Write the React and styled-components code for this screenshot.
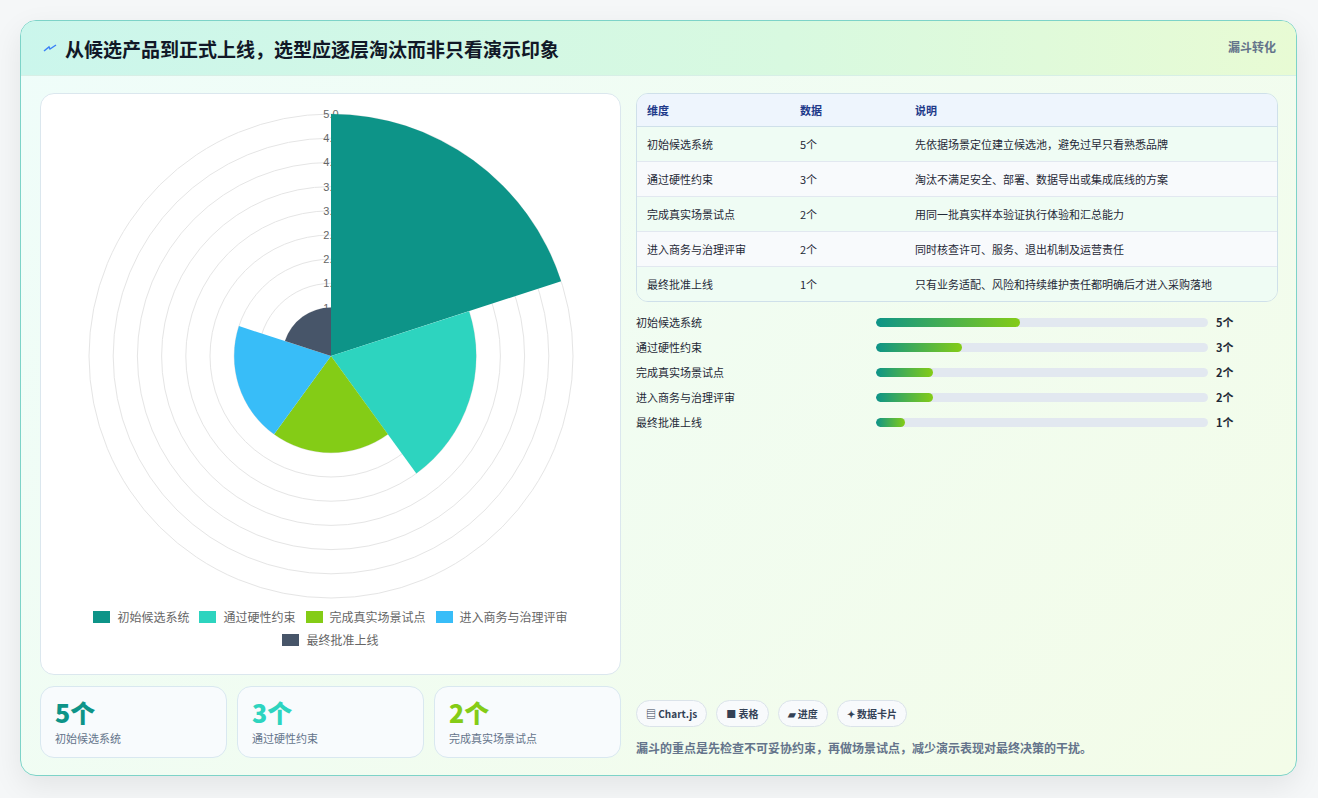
import React from "react";
import styled, { createGlobalStyle } from "styled-components";

const G = createGlobalStyle`
  body{margin:0;background:#f5f7f8;font-family:"Noto Sans CJK SC","Noto Sans",sans-serif;}
`;
const data = [
  { n: "初始候选系统", v: 5, c: "#0d9488", d: "先依据场景定位建立候选池，避免过早只看熟悉品牌" },
  { n: "通过硬性约束", v: 3, c: "#2dd4bf", d: "淘汰不满足安全、部署、数据导出或集成底线的方案" },
  { n: "完成真实场景试点", v: 2, c: "#84cc16", d: "用同一批真实样本验证执行体验和汇总能力" },
  { n: "进入商务与治理评审", v: 2, c: "#38bdf8", d: "同时核查许可、服务、退出机制及运营责任" },
  { n: "最终批准上线", v: 1, c: "#475569", d: "只有业务适配、风险和持续维护责任都明确后才进入采购落地" },
];
const Page = styled.div`padding:20px 21px 22px 20px;`;
const Card = styled.div`
  height:754px;border:1px solid #7dd3c8;border-radius:16px;overflow:hidden;
  background:linear-gradient(135deg,#effdfa 0%,#f3fce8 100%);
  box-shadow:0 10px 30px rgba(0,0,0,.08);display:flex;flex-direction:column;`;
const Header = styled.div`
  height:54px;flex:none;display:flex;align-items:center;justify-content:space-between;
  padding:0 20px 0 22px;border-bottom:1px solid #d7efe6;
  background:linear-gradient(90deg,#cbf6ec 0%,#d8f9e0 60%,#e8fbd4 100%);`;
const Title = styled.h1`margin:0;font-size:19px;font-weight:700;color:#111827;display:flex;align-items:center;gap:8px;`;
const Tag = styled.span`font-size:12px;font-weight:700;color:#64748b;align-self:flex-start;margin-top:17px;`;
const Body = styled.div`flex:1;display:grid;grid-template-columns:581px 1fr;gap:15px;padding:17px 18px 18px 19px;`;
const Left = styled.div`display:flex;flex-direction:column;gap:11px;`;
const ChartCard = styled.div`height:580px;background:#fff;border:1px solid #dbe7ee;border-radius:14px;display:flex;flex-direction:column;align-items:center;`;
const Legend = styled.div`width:500px;display:flex;flex-wrap:wrap;justify-content:center;gap:6px 10px;margin-top:4px;`;
const LItem = styled.span`display:flex;align-items:center;gap:7px;font-size:12px;color:#666;`;
const Sw = styled.i`width:17px;height:12px;background:${p => p.c};display:inline-block;`;
const Stats = styled.div`display:grid;grid-template-columns:repeat(3,1fr);gap:10px;`;
const Stat = styled.div`height:72px;box-sizing:border-box;border:1px solid #d9e8f0;border-radius:14px;background:#f8fbfd;padding:10px 14px;`;
const Big = styled.div`font-size:25px;font-weight:800;color:${p => p.c};line-height:30px;`;
const Small = styled.div`font-size:11px;color:#64748b;margin-top:3px;`;
const Right = styled.div`display:flex;flex-direction:column;`;
const Table = styled.table`width:100%;border-collapse:separate;border-spacing:0;border:1px solid #cfe0ea;border-radius:12px;overflow:hidden;font-size:11px;`;
const Th = styled.th`text-align:left;height:32px;padding:0 10px;background:#eef5fd;color:#1e3a8a;font-weight:600;border-bottom:1px solid #cfe0ea;`;
const Td = styled.td`height:34px;padding:0 10px;color:#1f2937;background:${p => p.odd ? "#f8fafc" : "#effcf4"};border-top:${p => p.first ? "none" : "1px solid #e2e8f0"};`;
const Bars = styled.div`display:flex;flex-direction:column;gap:11px;margin-top:12px;`;
const BarRow = styled.div`display:grid;grid-template-columns:240px 332px 1fr;align-items:center;gap:0 0;font-size:11px;color:#1f2937;height:14px;`;
const Track = styled.div`height:9px;border-radius:5px;background:#e2e8f0;overflow:hidden;`;
const Fill = styled.div`height:100%;border-radius:5px;background:linear-gradient(90deg,#0d9488,#84cc16);`;
const Val = styled.span`font-weight:700;padding-left:8px;`;
const Foot = styled.div`margin-top:auto;display:flex;flex-direction:column;gap:12px;padding-bottom:2px;`;
const Chips = styled.div`display:flex;gap:9px;`;
const Chip = styled.span`height:27px;box-sizing:border-box;padding:0 9px;border:1px solid #dbe3ea;border-radius:14px;background:#f8fafc;font-size:10px;font-weight:700;color:#334155;display:flex;align-items:center;gap:4px;`;
const Note = styled.div`font-size:12px;font-weight:600;color:#64748b;`;

function Polar() {
  const cx = 290, cy = 262, R = 242;
  const arc = (v, i) => {
    const r = (v / 5) * R, a0 = (-90 + i * 72) * Math.PI / 180, a1 = (-90 + (i + 1) * 72) * Math.PI / 180;
    return `M${cx},${cy} L${cx + r * Math.cos(a0)},${cy + r * Math.sin(a0)} A${r},${r} 0 0 1 ${cx + r * Math.cos(a1)},${cy + r * Math.sin(a1)} Z`;
  };
  const rings = [1,2,3,4,5,6,7,8,9,10];
  return (
    <svg width="580" height="510" style={{ marginTop: 0 }}>
      {rings.map(k => <circle key={k} cx={cx} cy={cy} r={k * R / 10} fill="none" stroke="#e5e5e5" />)}
      {rings.map(k => <text key={k} x={cx} y={cy - k * R / 10 + 4} fontSize="11" fill="#666" textAnchor="middle" fontFamily="Liberation Sans">{(k / 2).toFixed(1)}</text>)}
      {data.map((d, i) => <path key={i} d={arc(d.v, i)} fill={d.c} />)}
    </svg>
  );
}

export default function App() {
  return (
    <Page><G />
      <Card>
        <Header>
          <Title><svg width="14" height="10" viewBox="0 0 14 10"><path d="M1 8 L6 4 L7 6 L13 2" stroke="#3b82f6" strokeWidth="1.5" fill="none" /></svg>从候选产品到正式上线，选型应逐层淘汰而非只看演示印象</Title>
          <Tag>漏斗转化</Tag>
        </Header>
        <Body>
          <Left>
            <ChartCard>
              <Polar />
              <Legend>{data.map(d => <LItem key={d.n}><Sw c={d.c} />{d.n}</LItem>)}</Legend>
            </ChartCard>
            <Stats>{data.slice(0, 3).map(d => <Stat key={d.n}><Big c={d.c}>{d.v}个</Big><Small>{d.n}</Small></Stat>)}</Stats>
          </Left>
          <Right>
            <Table>
              <thead><tr><Th style={{ width: 133 }}>维度</Th><Th style={{ width: 95 }}>数据</Th><Th>说明</Th></tr></thead>
              <tbody>{data.map((d, i) => <tr key={d.n}><Td odd={i % 2} first={i === 0}>{d.n}</Td><Td odd={i % 2} first={i === 0}>{d.v}个</Td><Td odd={i % 2} first={i === 0}>{d.d}</Td></tr>)}</tbody>
            </Table>
            <Bars>{data.map(d => <BarRow key={d.n}><span>{d.n}</span><Track><Fill style={{ width: `${d.v * 8.65}%` }} /></Track><Val>{d.v}个</Val></BarRow>)}</Bars>
            <Foot>
              <Chips><Chip>▤ Chart.js</Chip><Chip>■ 表格</Chip><Chip>▰ 进度</Chip><Chip>✦ 数据卡片</Chip></Chips>
              <Note>漏斗的重点是先检查不可妥协约束，再做场景试点，减少演示表现对最终决策的干扰。</Note>
            </Foot>
          </Right>
        </Body>
      </Card>
    </Page>
  );
}
